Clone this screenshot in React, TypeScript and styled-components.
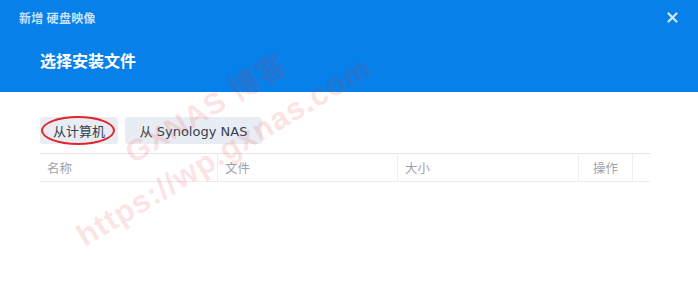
import React from 'react';
import styled, { createGlobalStyle } from 'styled-components';

const fontStack = `"DejaVu Sans", "Noto Sans CJK SC", sans-serif`;

const GlobalStyle = createGlobalStyle`
  html, body {
    margin: 0;
    padding: 0;
    background: #ffffff;
    font-family: ${fontStack};
  }
`;

const Dialog = styled.div`
  position: relative;
  width: 698px;
  height: 298px;
  overflow: hidden;
  background: #fff;
`;

const Header = styled.div`
  height: 92px;
  background: #0780ea;
  display: flex;
  flex-direction: column;
  box-sizing: border-box;
`;

const TopBar = styled.div`
  height: 35px;
  display: flex;
  align-items: center;
  justify-content: space-between;
  padding: 0 19px 0 19px;
`;

const WindowTitle = styled.span`
  font-family: "Noto Sans CJK SC", sans-serif;
  font-size: 12px;
  font-weight: bold;
  color: #c7e2fd;
  letter-spacing: 0.3px;
`;

const CloseButton = styled.button`
  border: none;
  background: transparent;
  padding: 0;
  width: 14px;
  height: 14px;
  display: flex;
  align-items: center;
  justify-content: center;
  cursor: pointer;
`;

const StepTitle = styled.h2`
  margin: 0;
  padding: 13px 0 0 40px;
  font-family: "Noto Sans CJK SC", sans-serif;
  font-size: 16px;
  font-weight: bold;
  color: #ffffff;
  line-height: 24px;
`;

const Body = styled.div`
  padding: 25px 48px 0 40px;
`;

const Toolbar = styled.div`
  display: flex;
  gap: 7px;
`;

const SourceButton = styled.button<{ $width: number }>`
  position: relative;
  width: ${({ $width }) => $width}px;
  height: 27px;
  border: none;
  border-radius: 3px;
  background: #e8edf4;
  color: #36404e;
  font-family: ${fontStack};
  font-size: 13px;
  padding: 0;
  display: flex;
  align-items: center;
  justify-content: center;
  cursor: pointer;
`;

const Circle = styled.span`
  position: absolute;
  left: 1px;
  top: -1px;
  width: 74px;
  height: 29px;
  border: 2px solid #e0262b;
  border-radius: 50%;
  box-sizing: border-box;
`;

const Table = styled.div`
  margin-top: 9px;
  width: 610px;
  display: grid;
  grid-template-columns: 178px 180px 181px 54px 17px;
  height: 29px;
  border-top: 1px solid #e3e5e8;
  border-bottom: 1px solid #e9ebee;
  box-sizing: border-box;
`;

const HeadCell = styled.div<{ $align?: string; $last?: boolean }>`
  display: flex;
  align-items: center;
  justify-content: ${({ $align }) => $align ?? 'flex-start'};
  padding-left: ${({ $align }) => ($align ? '0' : '7px')};
  border-right: ${({ $last }) => ($last ? 'none' : '1px solid #eceef1')};
  font-family: "Noto Sans CJK SC", sans-serif;
  font-size: 12.5px;
  color: #9fa3a8;
`;

const Watermark = styled.div<{ $x: number; $y: number; $size: number }>`
  position: absolute;
  left: ${({ $x }) => $x}px;
  top: ${({ $y }) => $y}px;
  transform: translate(-50%, -50%) rotate(-31deg);
  font-family: "Liberation Sans", "Noto Sans CJK SC", sans-serif;
  font-weight: bold;
  font-size: ${({ $size }) => $size}px;
  color: rgba(240, 40, 40, 0.15);
  white-space: nowrap;
  pointer-events: none;
  letter-spacing: 1px;
`;

const CloseIcon = () => (
  <svg width="11" height="11" viewBox="0 0 11 11">
    <path d="M1.5 1.5 L9.5 9.5 M9.5 1.5 L1.5 9.5" stroke="#d2e9ff" strokeWidth="2.2" strokeLinecap="round" />
  </svg>
);

const columns = [
  { label: '名称' },
  { label: '文件' },
  { label: '大小' },
  { label: '操作', align: 'center' },
  { label: '', last: true },
];

export default function App() {
  return (
    <>
      <GlobalStyle />
      <Dialog>
        <Header>
          <TopBar>
            <WindowTitle>新增 硬盘映像</WindowTitle>
            <CloseButton>
              <CloseIcon />
            </CloseButton>
          </TopBar>
          <StepTitle>选择安装文件</StepTitle>
        </Header>
        <Body>
          <Toolbar>
            <SourceButton $width={78}>
              从计算机
              <Circle />
            </SourceButton>
            <SourceButton $width={137}>从 Synology NAS</SourceButton>
          </Toolbar>
          <Table>
            {columns.map((c, i) => (
              <HeadCell key={i} $align={c.align} $last={c.last}>
                {c.label}
              </HeadCell>
            ))}
          </Table>
        </Body>
        <Watermark $x={205} $y={106} $size={30}>GXNAS 博客</Watermark>
        <Watermark $x={224} $y={152} $size={31}>https://wp.gxnas.com</Watermark>
      </Dialog>
    </>
  );
}
